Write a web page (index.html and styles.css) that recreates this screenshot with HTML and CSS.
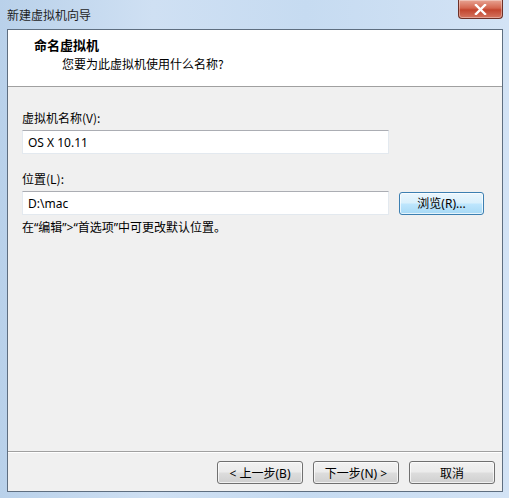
FILE: index.html
```html
<!DOCTYPE html>
<html lang="zh-CN">
  <head>
    <meta charset="UTF-8" />
    <meta name="viewport" content="width=device-width, initial-scale=1.0" />
    <title>新建虚拟机向导</title>
    <link rel="stylesheet" href="styles.css">
  </head>
  <body>
    <div class="window">
      <!-- Title bar -->
      <div class="titlebar">
        <span class="title">新建虚拟机向导</span>
        <button class="close-btn" aria-label="关闭">
          <svg width="13" height="11" viewBox="0 0 13 11">
            <path d="M2 1 L11 10 M11 1 L2 10" stroke="#ffffff" stroke-width="2.4" stroke-linecap="square" />
          </svg>
        </button>
      </div>

      <!-- Client area -->
      <div class="client">
        <div class="header">
          <div class="header-title">命名虚拟机</div>
          <div class="header-sub">您要为此虚拟机使用什么名称?</div>
        </div>

        <div class="content">
          <label class="field-label">虚拟机名称(V):</label>
          <div class="field-row">
            <input class="textbox" type="text" value="OS X 10.11" />
          </div>

          <label class="field-label second">位置(L):</label>
          <div class="field-row">
            <input class="textbox" type="text" value="D:\mac" />
            <button class="btn btn-default browse">浏览(R)...</button>
          </div>

          <p class="hint">在“编辑”&gt;“首选项”中可更改默认位置。</p>
        </div>

        <div class="footer">
          <button class="btn">&lt; 上一步(B)</button>
          <button class="btn">下一步(N) &gt;</button>
          <button class="btn cancel">取消</button>
        </div>
      </div>
    </div>
  </body>
</html>
```

FILE: styles.css
```css
body {
  margin: 0;
  padding: 0;
  font-family: "Noto Sans", "Noto Sans CJK SC", sans-serif;
  font-size: 12px;
  color: #000;
  overflow: hidden;
}

/* Aero window frame */
.window {
  width: 509px;
  height: 498px;
  display: flex;
  flex-direction: column;
  background: linear-gradient(to right, #b9d1ea, #cfe0f3 30%, #c6dbf1 60%, #d3e3f5);
}

.titlebar {
  height: 29px;
  display: flex;
  align-items: flex-start;
  padding-left: 7px;
  padding-right: 6px;
}
.title {
  line-height: 12px;
  margin-top: 9px;
  font-family: "Noto Sans CJK SC", sans-serif;
  font-size: 12px;
  color: #1e1e1e;
}
.close-btn {
  margin-left: auto;
  width: 45px;
  height: 19px;
  padding: 0;
  border: 1px solid #6d3027;
  border-top: none;
  border-radius: 0 0 4px 4px;
  background: linear-gradient(to bottom, #e8a493, #d4664f 45%, #c2452e 55%, #d57560);
  box-shadow: inset 0 0 0 1px rgba(255, 255, 255, 0.35);
  display: flex;
  align-items: center;
  justify-content: center;
}

/* Inner dialog area */
.client {
  height: 463px;
  margin: 0 6px 0 7px;
  border: 1px solid #5e6e80;
  background: #f0f0f0;
  display: flex;
  flex-direction: column;
  box-sizing: border-box;
}

.header {
  height: 57px;
  background: #ffffff;
  border-bottom: 1px solid #a0a0a0;
  box-sizing: border-box;
  padding-top: 7px;
}
.header-title {
  padding-left: 26px;
  font-family: "Noto Sans CJK SC", sans-serif;
  font-weight: bold;
  font-size: 13px;
  line-height: 16px;
}
.header-sub {
  padding-left: 54px;
  margin-top: 3px;
  font-family: "Noto Sans CJK SC", sans-serif;
  line-height: 16px;
}

.content {
  flex: 1;
  padding: 23px 0 0 14px;
  display: flex;
  flex-direction: column;
}
.field-label {
  line-height: 16px;
  font-family: "Noto Sans CJK SC", sans-serif;
}
.field-label.second {
  margin-top: 17px;
}
.field-row {
  display: flex;
  align-items: center;
  gap: 10px;
  margin-top: 4px;
}
.textbox {
  width: 367px;
  height: 24px;
  box-sizing: border-box;
  margin: 0;
  padding: 0 5px;
  border: 1px solid #e3e9ef;
  border-top-color: #abadb3;
  background: #ffffff;
  font-family: "Noto Sans", "Noto Sans CJK SC", sans-serif;
  font-size: 12px;
  color: #000;
  outline: none;
}

.btn {
  height: 23px;
  width: 86px;
  box-sizing: border-box;
  padding: 0;
  border: 1px solid #707070;
  border-radius: 3px;
  background: linear-gradient(to bottom, #f2f2f2, #ebebeb 48%, #dddddd 52%, #cfcfcf);
  box-shadow: inset 0 0 0 1px rgba(255, 255, 255, 0.7);
  font-family: "Noto Sans", "Noto Sans CJK SC", sans-serif;
  font-size: 12px;
  color: #000;
}
.btn-default {
  border-color: #3c7fb1;
  background: linear-gradient(to bottom, #eaf6fd, #d9f0fc 48%, #bee6fd 52%, #a7d9f5);
}
.browse {
  width: 85px;
}

.hint {
  margin: 5px 0 0;
  line-height: 16px;
  font-family: "Noto Sans", "Noto Sans CJK SC", sans-serif;
}

.footer {
  height: 40px;
  border-top: 1px solid #a0a0a0;
  box-shadow: inset 0 1px 0 #ffffff;
  display: flex;
  justify-content: flex-end;
  align-items: flex-start;
  gap: 10px;
  padding: 9px 7px 0 0;
  box-sizing: border-box;
}
.cancel {
  width: 86px;
}
```
